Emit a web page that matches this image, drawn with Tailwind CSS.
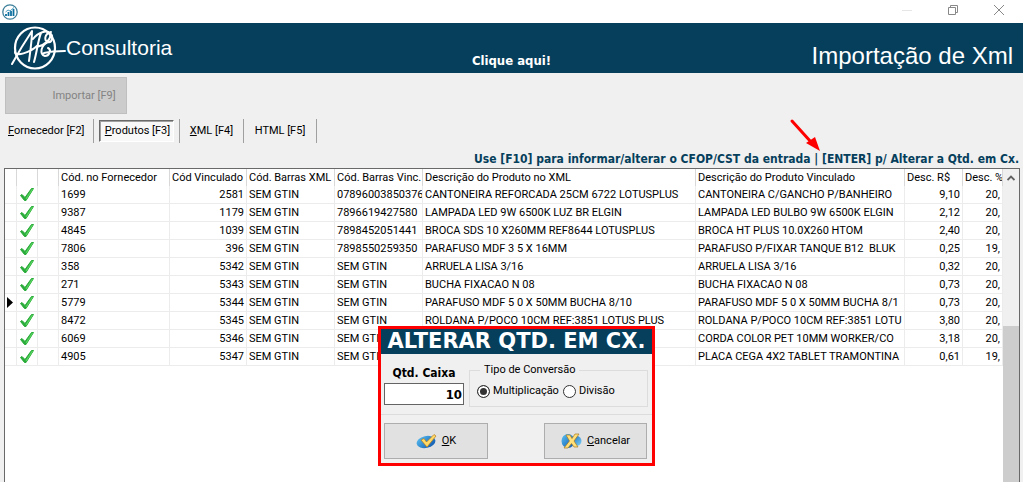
<!DOCTYPE html>
<html lang="pt-BR">
<head>
<meta charset="utf-8">
<title>Importação de Xml</title>
<script src="https://cdn.jsdelivr.net/npm/@tailwindcss/browser@4"></script>
</head>
<body class="relative flex h-screen flex-col overflow-hidden bg-[#f0f0f0] font-[Roboto,sans-serif] text-[11px] leading-4 text-black">
<svg class="absolute size-0" aria-hidden="true">
  <defs>
    <linearGradient id="blue" x1="0" y1="0" x2="1" y2="1"><stop offset="0" stop-color="#5cc4f5"/><stop offset="1" stop-color="#0a4fa8"/></linearGradient>
    <linearGradient id="sky" x1="0" y1="0" x2="1" y2="1"><stop offset="0" stop-color="#1668b8"/><stop offset="1" stop-color="#7fd4fa"/></linearGradient>
    <symbol id="check" viewBox="0 0 16 15"><path d="M1.500 8.500L3 7.500L6 10.500L12.500 1.500L14.500 1.500L7 13.500H5.500Z" fill="#28ab38" stroke="#28ab38" stroke-linejoin="round"/><path d="M7 12L13.500 2" stroke="#5bd562" stroke-width="1.300"/></symbol>
  </defs>
</svg>

<div class="flex h-[23px] shrink-0 items-center justify-between bg-white pl-[2px] pr-[19px]">
  <svg class="size-4" viewBox="0 0 16 16"><circle cx="8" cy="8" r="7.200" fill="#fff" stroke="#3f809b" stroke-width="1.300"/><path d="M4 12V10M6.500 12V8M9 12V7M11.500 12V5" stroke="#0d6f9f" stroke-width="1.800"/><path d="M3.500 8L6 6L8 7L12 3.500" stroke="#4b9bbd" fill="none"/></svg>
  <div class="flex items-center gap-9 pb-[3px] text-[#888]">
    <button aria-label="Minimizar"><svg class="block h-[11px] w-[10px]" viewBox="0 0 10 11"><path d="M0 5.500H10" stroke="#e6e6e6"/></svg></button>
    <button aria-label="Restaurar"><svg class="block size-[10px]" viewBox="0 0 10 10" fill="none" stroke="currentColor"><path d="M.5 2.500h7v7h-7zM2.500 2.500v-2h7v7h-2"/></svg></button>
    <button aria-label="Fechar"><svg class="block size-[10px]" viewBox="0 0 10 10" stroke="currentColor"><path d="M0 0L10 10M10 0L0 10"/></svg></button>
  </div>
</div>

<header class="grid h-[50px] shrink-0 grid-cols-3 bg-[#063f5c] font-['Liberation_Sans',sans-serif] text-white">
  <div class="flex items-center pl-[10px]">
    <svg class="h-[46px] w-[56px]" viewBox="0 0 56 46" fill="none" stroke="#fff" stroke-linecap="round" stroke-linejoin="round">
      <ellipse cx="25" cy="23" rx="20" ry="20.500" stroke-width="2.200"/>
      <path d="M2 39C8 28 16 15 22 6C22 16 20 28 19 36M5 27C5 32 20 28 28 20M24 37C27 27 28 15 31 8M23 14C28 7 37 5 40 8C42 14 35 20 27 22M41 7C34 9 34 16 38 17C42 18 44 11 40 8M38 17C31 20 29 29 35 31C39 31 42 25 38 23M34 28C42 26 47 26 55 26" stroke-width="2"/>
    </svg>
    <span class="text-[21px]">Consultoria</span>
  </div>
  <a href="#" class="self-end pb-1 text-center font-['DejaVu_Sans_Condensed','DejaVu_Sans',sans-serif] text-[13px] font-bold">Clique aqui!</a>
  <h1 class="self-center pr-[10px] pt-4 text-right text-2xl leading-8">Importação de Xml</h1>
</header>

<div class="px-[5px] pt-1">
  <button disabled class="block h-[37px] w-[122px] border border-[#bfbfbf] bg-[#ccc] pl-9 text-[#838383]">Importar [F9]</button>
</div>

<nav class="flex h-6 shrink-0 items-stretch mt-[5px] pl-2">
  <button class="w-[86px] border-r border-[#a0a0a0] pr-2 text-left"><u>F</u>ornecedor [F2]</button>
  <button class="mx-[5px] my-px w-[75px] border border-white border-l-[#696969] border-t-[#696969] bg-[#f8f8f8] pl-[2px] shadow-[inset_1px_1px_0_#a0a0a0]"><u>P</u>rodutos [F3]</button>
  <button class="w-[65px] border-x border-[#a0a0a0]"><u>X</u>ML [F4]</button>
  <button class="w-[73px] border-r border-[#a0a0a0]">HTML [F5]</button>
</nav>

<p class="mt-2 mb-px pr-1 text-right font-['DejaVu_Sans_Condensed','DejaVu_Sans',sans-serif] text-xs leading-4 font-bold whitespace-nowrap text-[#063f5c]">Use [F10] para informar/alterar o CFOP/CST da entrada | [ENTER] p/ Alterar a Qtd. em Cx.</p>
<svg class="absolute top-[118px] left-[789px] h-[34px] w-[32px]" viewBox="0 0 32 34"><path d="M3 3L22 24" stroke="#f00" stroke-width="3" stroke-linecap="round"/><path d="M31 33L17 25L26 19Z" fill="#f00"/></svg>

<main class="ml-1 mr-[3px] flex min-h-0 flex-1 border border-b-0 border-[#696969] bg-white">
  <div class="min-w-0 flex-1 overflow-hidden">
    <table class="w-full table-fixed border-separate border-spacing-0 whitespace-nowrap [&_td]:h-[18px] [&_td]:overflow-hidden [&_td]:border-r [&_td]:border-b [&_td]:border-[#ececec] [&_td]:px-[2px] [&_td]:py-0 [&_th]:h-[17px] [&_th]:overflow-hidden [&_th]:border-r [&_th]:border-[#d8d8d8] [&_th]:px-[2px] [&_th]:py-0 [&_th]:text-left [&_th]:font-normal">
      <colgroup><col class="w-[12px]"><col class="w-[21px]"><col class="w-[21px]"><col class="w-[111px]"><col class="w-[77px]"><col class="w-[88px]"><col class="w-[88px]"><col class="w-[273px]"><col class="w-[209px]"><col class="w-[58px]"><col></colgroup>
      <thead><tr><th></th><th></th><th></th><th>Cód. no Fornecedor</th><th>Cód Vinculado</th><th>Cód. Barras XML</th><th>Cód. Barras Vinc.</th><th>Descrição do Produto no XML</th><th>Descrição do Produto Vinculado</th><th>Desc. R$</th><th>Desc. %</th></tr></thead>
      <tbody id="rows"></tbody>
    </table>
  </div>
  <div class="flex w-4 shrink-0 flex-col bg-[#f0f0f0]">
    <button aria-label="Rolar para cima" class="flex h-[17px] items-center justify-center"><svg class="h-[6px] w-2" viewBox="0 0 8 6"><path d="M.5 5L4 1.500L7.500 5" fill="none" stroke="#606060" stroke-width="1.800"/></svg></button>
    <div class="mt-[140px] flex-1 bg-[#cdcdcd]"></div>
  </div>
</main>

<section role="dialog" aria-labelledby="dlg" class="absolute top-[326px] left-[378px] w-[277px] border-3 border-[#f00] bg-[#f0f0f0]">
  <h2 id="dlg" class="h-[25px] bg-[#063f5c] text-center font-['DejaVu_Sans',sans-serif] text-[21px] leading-[25px] font-bold whitespace-nowrap text-white">ALTERAR QTD. EM CX.</h2>
  <div class="flex h-[61px] gap-[5px] border-b border-[#dcdcdc] pl-[3px] pr-[4px]">
    <div class="flex w-20 flex-col pt-[10px] font-['DejaVu_Sans_Condensed','DejaVu_Sans',sans-serif] font-bold">
      <label for="qtd" class="text-center text-xs leading-[19px]">Qtd. Caixa</label>
      <input id="qtd" value="10" class="h-[22px] w-full border border-[#646464] bg-white pr-px text-right text-[13px]">
    </div>
    <fieldset class="mt-2 h-[45px] min-w-0 flex-1 border border-[#dcdcdc] px-[7px]">
      <legend class="ml-[3px] px-1 leading-4">Tipo de Conversão</legend>
      <div class="flex items-center gap-1 pt-[5px]">
        <label class="flex items-center gap-[3px]"><input type="radio" name="tipo" checked class="size-[13px] appearance-none rounded-full border border-[#333] bg-white checked:bg-[#333] checked:shadow-[inset_0_0_0_2px_white]">Multiplicação</label>
        <label class="flex items-center gap-[3px]"><input type="radio" name="tipo" class="size-[13px] appearance-none rounded-full border border-[#333] bg-white">Divisão</label>
      </div>
    </fieldset>
  </div>
  <div class="flex h-12 items-center justify-between pl-[3px] pr-[5px] pt-1">
    <button class="flex h-9 w-[104px] items-center justify-center gap-[5px] border border-[#adadad] bg-[#e1e1e1]"><svg class="h-4 w-[21px]" viewBox="0 0 21 16"><ellipse cx="10" cy="9" rx="9.500" ry="6" transform="rotate(-12 10 9)" fill="url(#blue)"/><path d="M5 7L8 5.500L10.500 9L18 1.500L20 3L11 14Z" fill="#ffd965" stroke="#b77b1b" stroke-width=".7"/></svg><span><u>O</u>K</span></button>
    <button class="flex h-9 w-[103px] items-center justify-center gap-[5px] border border-[#adadad] bg-[#e1e1e1]"><svg class="h-4 w-[21px]" viewBox="0 0 21 16"><ellipse cx="7" cy="8" rx="6.500" ry="7" fill="url(#blue)"/><circle cx="15.500" cy="8" r="5" fill="url(#sky)"/><path d="M5 2H9L11 5.500L14 1H18L13 8L17 14H13L10.500 10.500L7 15H3L8.500 8Z" fill="#ffe07a" stroke="#a97a20" stroke-width=".7"/></svg><span><u>C</u>ancelar</span></button>
  </div>
</section>

<script>
const data = [
  ['1699','2581','07896003850376','CANTONEIRA REFORCADA 25CM 6722 LOTUSPLUS','CANTONEIRA C/GANCHO P/BANHEIRO','9,10','20,'],
  ['9387','1179','7896619427580','LAMPADA LED 9W 6500K LUZ BR ELGIN','LAMPADA LED BULBO 9W 6500K ELGIN','2,12','20,'],
  ['4845','1039','7898452051441','BROCA SDS 10 X260MM REF8644 LOTUSPLUS','BROCA HT PLUS 10.0X260 HTOM','2,40','20,'],
  ['7806','396','7898550259350','PARAFUSO MDF 3 5 X 16MM','PARAFUSO P/FIXAR TANQUE B12  BLUK','0,25','19,'],
  ['358','5342','SEM GTIN','ARRUELA LISA 3/16','ARRUELA LISA 3/16','0,32','20,'],
  ['271','5343','SEM GTIN','BUCHA FIXACAO N 08','BUCHA FIXACAO N 08','0,73','20,'],
  ['5779','5344','SEM GTIN','PARAFUSO MDF 5 0 X 50MM BUCHA 8/10','PARAFUSO MDF 5 0 X 50MM BUCHA 8/1','0,73','20,'],
  ['8472','5345','SEM GTIN','ROLDANA P/POCO 10CM REF:3851 LOTUS PLUS','ROLDANA P/POCO 10CM REF:3851 LOTU','3,80','20,'],
  ['6069','5346','SEM GTIN','CORDA COLOR PET 10MM WORKER/COLORS','CORDA COLOR PET 10MM WORKER/CO','3,18','20,'],
  ['4905','5347','SEM GTIN','PLACA CEGA 4X2 TABLET TRAMONTINA','PLACA CEGA 4X2 TABLET TRAMONTINA','0,61','19,'],
];
document.getElementById('rows').innerHTML = data.map((r, i) => `<tr>
<td>${i === 6 ? '<svg class="block h-[11px] w-[6px]" viewBox="0 0 6 11"><path d="M0 0L6 5.500L0 11Z"/></svg>' : ''}</td>
<td><svg class="block h-[15px] w-4"><use href="#check"/></svg></td><td></td>
<td>${r[0]}</td><td class="text-right">${r[1]}</td><td>SEM GTIN</td><td>${r[2]}</td><td>${r[3]}</td><td class="whitespace-pre">${r[4]}</td><td class="text-right">${r[5]}</td><td class="text-right">${r[6]}</td></tr>`).join('');
</script>
</body>
</html>
